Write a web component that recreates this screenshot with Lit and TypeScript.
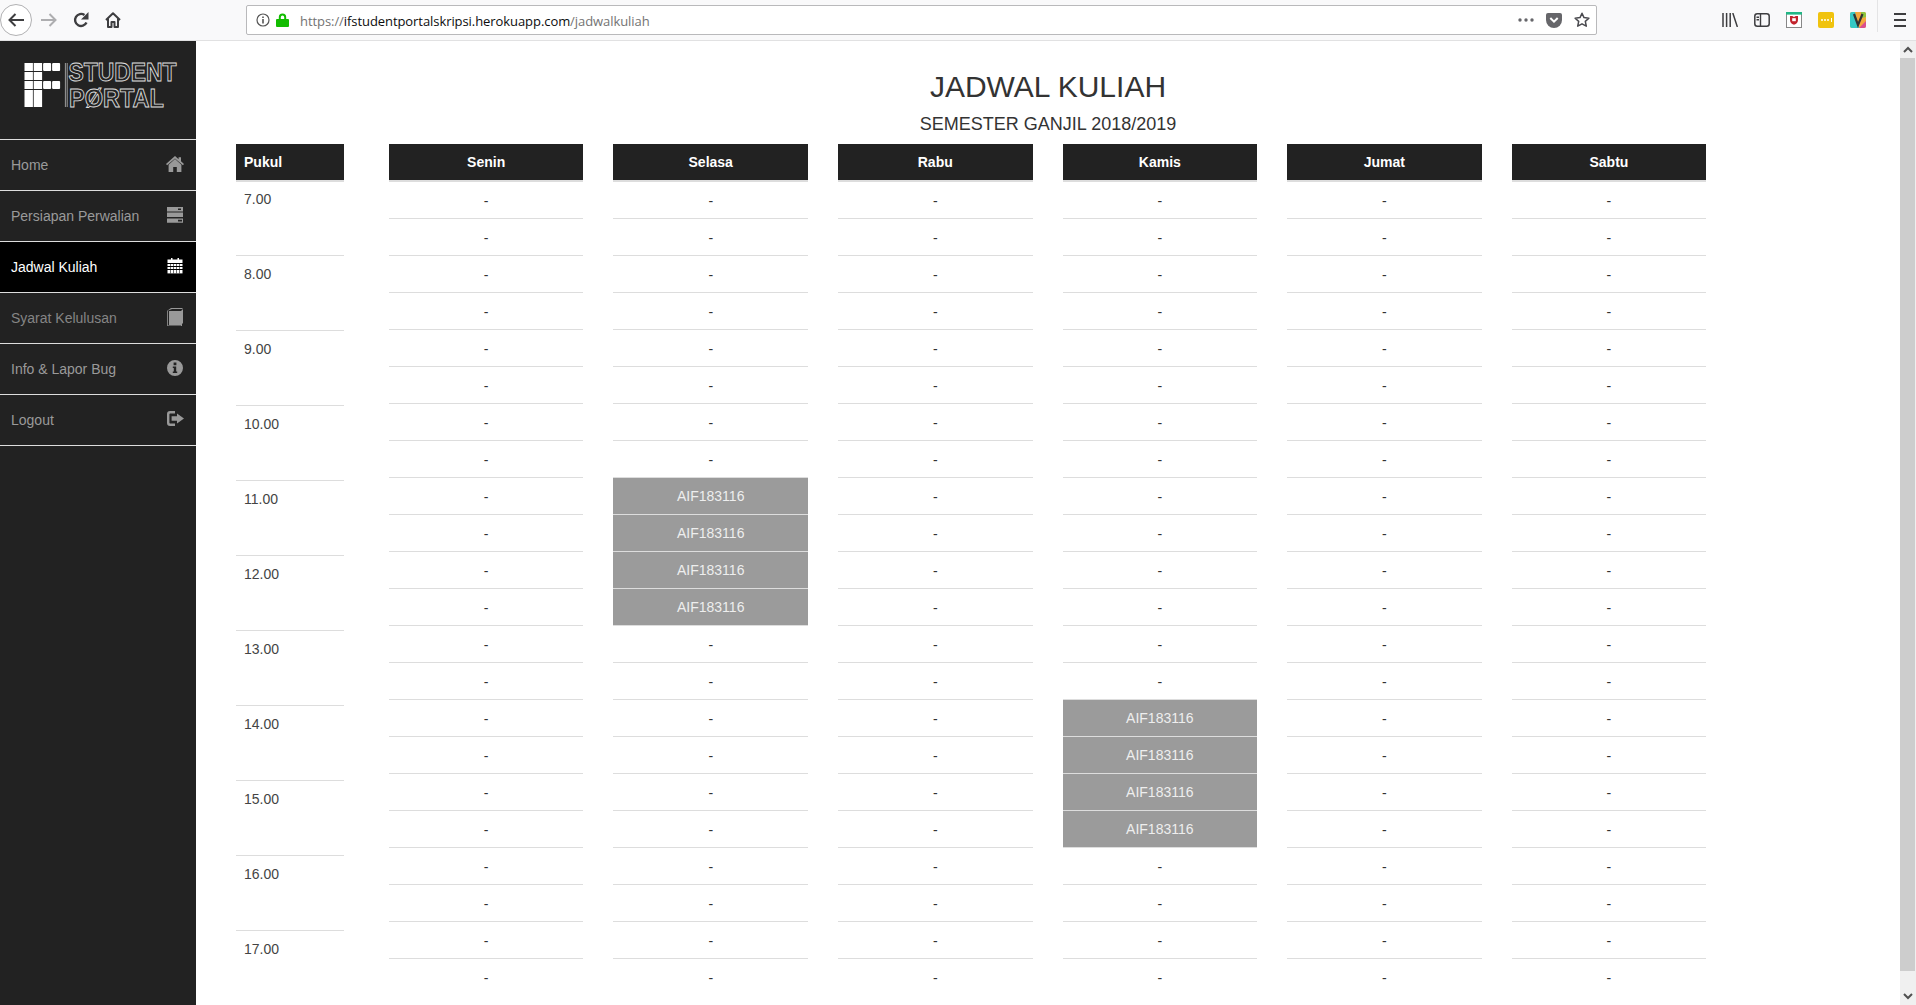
import { LitElement, html, css, svg } from "lit";
import { customElement } from "lit/decorators.js";

const DAYS: { name: string; filled: number[] }[] = [
  { name: "Senin", filled: [] },
  { name: "Selasa", filled: [8, 9, 10, 11] },
  { name: "Rabu", filled: [] },
  { name: "Kamis", filled: [14, 15, 16, 17] },
  { name: "Jumat", filled: [] },
  { name: "Sabtu", filled: [] },
];
const HOURS = ["7.00", "8.00", "9.00", "10.00", "11.00", "12.00", "13.00", "14.00", "15.00", "16.00", "17.00"];
const ROWS = Array.from({ length: 22 }, (_, i) => i);

const ICONS: Record<string, unknown> = {
  home: svg`<svg width="18" height="16" viewBox="0 0 18 16"><path fill="#999" d="M9 0 12.6 3.2V1.2H15V5.3L18 8 16.9 9.2 9 2.4 1.1 9.2 0 8ZM9 3.1 15.4 8.7V16H10.8V11H7.2V16H2.6V8.7Z"/></svg>`,
  server: svg`<svg width="18" height="16" viewBox="0 0 18 16"><path fill="#999" fill-rule="evenodd" d="M1 0H17V4.4H1ZM12 1.4V3H15V1.4ZM1 5.6H17V10H1ZM1 11.4H17V15.8H1ZM12 12.8V14.4H16V12.8Z"/></svg>`,
  calendar: svg`<svg width="16" height="16" viewBox="0 0 16 16"><path fill="#fff" d="M4 0H5.5V1.5H10.5V0H12V1.5H15.5V5H.5V1.5H4Z"/><g fill="#fff"><rect x=".5" y="6" width="15" height="2"/><rect x=".5" y="9" width="15" height="2"/><rect x=".5" y="12" width="15" height="3.4"/></g><g fill="#000" opacity=".55"><rect x="3" y="6" width="1" height="9.4"/><rect x="6" y="6" width="1" height="9.4"/><rect x="9" y="6" width="1" height="9.4"/><rect x="12" y="6" width="1" height="9.4"/></g></svg>`,
  book: svg`<svg width="17" height="18" viewBox="0 0 17 18"><path fill="#999" d="M4 0H15.5V1H5L1 2.5V17.4H14V2.6H15V1.6H16V15.5H15V18H.2V2.8Z"/><path fill="#999" d="M2 3H14V17H2Z"/></svg>`,
  info: svg`<svg width="16" height="16" viewBox="0 0 16 16"><path fill="#999" fill-rule="evenodd" d="M8 0A8 8 0 1 1 8 16 8 8 0 0 1 8 0ZM6.6 2.6V5.2H9.4V2.6ZM5.8 6.4V8H6.8V11.4H5.8V13H10.2V11.4H9.2V6.4Z"/></svg>`,
  logout: svg`<svg width="17" height="15" viewBox="0 0 17 15"><path fill="#999" d="M3 0H8V2.4H3.2Q2.4 2.4 2.4 3.2V11.8Q2.4 12.6 3.2 12.6H8V15H3Q0 15 0 12V3Q0 0 3 0Z"/><path fill="#999" d="M10 2.4 17 7.5 10 12.6V9.8H4.6V5.2H10Z"/></svg>`,
};

const NAV = [
  { label: "Home", icon: "home", cls: "" },
  { label: "Persiapan Perwalian", icon: "server", cls: "" },
  { label: "Jadwal Kuliah", icon: "calendar", cls: "active" },
  { label: "Syarat Kelulusan", icon: "book", cls: "dim" },
  { label: "Info & Lapor Bug", icon: "info", cls: "" },
  { label: "Logout", icon: "logout", cls: "" },
];

@customElement("browser-bar")
class BrowserBar extends LitElement {
  static styles = css`
    :host { display: flex; align-items: center; height: 40px; background: #f9f9fa; border-bottom: 1px solid #e1e1e2; flex: none; }
    .btn { width: 32px; height: 40px; display: flex; align-items: center; justify-content: center; flex: none; }
    .back { margin-right: 1px; }
    .circle { width: 32px; height: 32px; box-sizing: border-box; border: 1px solid #b1b1b3; border-radius: 50%; background: #fff; display: flex; align-items: center; justify-content: center; }
    .url { width: 1351px; height: 30px; margin-left: 117px; box-sizing: border-box; border: 1px solid #b9b9bb; border-radius: 2px; background: #fff; display: flex; align-items: center; padding-left: 9px; flex: none; }
    .addr { font: 13px "Open Sans", sans-serif; color: #0c0c0d; margin: 2px 0 0 11px; white-space: nowrap; letter-spacing: -.07px; }
    .addr span { color: #737373; }
    .lock { margin-left: 6px; }
    .end { margin-left: auto; margin-right: 6px; display: flex; align-items: center; gap: 12px; }
    .exts { margin-left: 117px; display: flex; flex: none; }
    .sep { width: 1px; height: 32px; background: #e4e4e5; margin-left: 3px; flex: none; }
    .menu { margin-left: 6px; }
  `;
  render() {
    return html`
      <div class="btn back"><div class="circle"><svg width="16" height="16" viewBox="0 0 16 16"><path fill="none" stroke="#3e3e40" stroke-width="2" d="M16 8H1.5M7.5 2 1.5 8l6 6"/></svg></div></div>
      <div class="btn"><svg width="16" height="16" viewBox="0 0 16 16"><path fill="none" stroke="#aeaeb0" stroke-width="2" d="M0 8H14.5M8.5 2l6 6-6 6"/></svg></div>
      <div class="btn"><svg width="16" height="16" viewBox="0 0 16 16"><path fill="none" stroke="#3e3e40" stroke-width="2.4" d="M13.5 10.5A6 6 0 1 1 11.5 3"/><path fill="#3e3e40" d="M15.5 0V7.5H8Z"/></svg></div>
      <div class="btn"><svg width="16" height="16" viewBox="0 0 16 16"><path fill="none" stroke="#3e3e40" stroke-width="2" stroke-linejoin="round" d="M1 8 8 1.2 15 8M3 6.5V15H6.5V10H9.5V15H13V6.5"/></svg></div>
      <div class="url">
        <svg width="14" height="14" viewBox="0 0 14 14"><circle cx="7" cy="7" r="6" fill="none" stroke="#555" stroke-width="1.2"/><path fill="#555" d="M6.2 6H7.8V10.5H6.2ZM6.2 3.4H7.8V5H6.2Z"/></svg>
        <svg class="lock" width="13" height="14" viewBox="0 0 13 14"><path fill="#12bc00" d="M1 6H2.8V4.2A3.7 3.7 0 0 1 10.2 4.2V6H12Q13 6 13 7V13Q13 14 12 14H1Q0 14 0 13V7Q0 6 1 6ZM4.8 6H8.2V4.2A1.7 1.7 0 0 0 4.8 4.2Z"/></svg>
        <div class="addr"><span>https://</span>ifstudentportalskripsi.herokuapp.com<span>/jadwalkuliah</span></div>
        <div class="end">
          <svg width="16" height="4" viewBox="0 0 16 4"><g fill="#66666a"><circle cx="2" cy="2" r="1.7"/><circle cx="8" cy="2" r="1.7"/><circle cx="14" cy="2" r="1.7"/></g></svg>
          <svg width="16" height="15" viewBox="0 0 16 15"><path fill="#66666a" d="M2 0H14Q16 0 16 2V7A8 8 0 0 1 0 7V2Q0 0 2 0Z"/><path fill="none" stroke="#fff" stroke-width="2" d="M4.3 5 8 8.7 11.7 5"/></svg>
          <svg width="16" height="16" viewBox="0 0 16 16"><path fill="none" stroke="#4a4a4f" stroke-width="1.5" stroke-linejoin="round" d="M8 1.2 10 5.6 14.9 6.2 11.3 9.4 12.3 14.2 8 11.8 3.7 14.2 4.7 9.4 1.1 6.2 6 5.6Z"/></svg>
        </div>
      </div>
      <div class="exts">
        <div class="btn"><svg width="16" height="14" viewBox="0 0 16 14"><path fill="none" stroke="#3e3e40" stroke-width="1.5" d="M1 0V14M4.6 0V14M8.2 0V14M10.8 0 15.4 14"/></svg></div>
        <div class="btn"><svg width="16" height="14" viewBox="0 0 16 14"><rect x=".8" y=".8" width="14.4" height="12.4" rx="2.5" fill="none" stroke="#3e3e40" stroke-width="1.5"/><path stroke="#3e3e40" stroke-width="1.4" d="M6.5 1V13M2.5 4.2H5M2.5 6.8H5"/></svg></div>
        <div class="btn"><svg width="16" height="16" viewBox="0 0 16 16"><rect x=".5" y=".5" width="15" height="15" fill="#fff" stroke="#888"/><rect width="16" height="2.6" fill="#21b685"/><path fill="#c2222c" d="M4 4H6.2L8 5 9.8 4H12V8Q12 11.5 8 12.8 4 11.5 4 8Z"/><rect x="6.2" y="6.2" width="3.6" height="3" fill="#fff"/></svg></div>
        <div class="btn"><svg width="16" height="16" viewBox="0 0 16 16"><rect width="16" height="16" rx="2" fill="#f0c30f"/><g fill="#fff"><circle cx="4" cy="8" r="1"/><circle cx="7" cy="8" r="1"/><circle cx="10" cy="8" r="1"/><rect x="13" y="6" width="1" height="4"/></g></svg></div>
        <div class="btn"><svg width="16" height="16" viewBox="0 0 16 16"><rect width="16" height="16" rx="2" fill="#f3a83b"/><path fill="#35c9c4" d="M0 2Q0 0 2 0H5L9 16H2Q0 16 0 14Z"/><path fill="#d94e8f" d="M9 16 16 9V14Q16 16 14 16Z"/><path fill="#8dc63f" d="M11 0H14Q16 0 16 2V5L12 6Z"/><path fill="none" stroke="#333" stroke-width="2.2" d="M4 2 8 13 12.5 2"/></svg></div>
        <div class="sep"></div>
        <div class="btn menu"><svg width="16" height="14" viewBox="0 0 16 14"><path stroke="#3e3e40" stroke-width="2" d="M2 1H14M2 7H14M2 13H14" fill="none"/></svg></div>
      </div>
    `;
  }
}

@customElement("side-nav")
class SideNav extends LitElement {
  static styles = css`
    :host { display: block; width: 196px; background: #222; flex: none; font: 14px "Liberation Sans", Arial, sans-serif; }
    .logo { height: 99px; box-sizing: border-box; padding: 10px 0 0 24px; border-bottom: 1px solid #ddd; display: flex; }
    .logo svg { display: block; overflow: visible; }
    .wm { font-family: "Liberation Sans", sans-serif; font-weight: 700; font-size: 25px; fill: none; stroke: #e0e0e0; stroke-width: .85px; }
    .item { height: 51px; box-sizing: border-box; border-bottom: 1px solid #ddd; display: flex; align-items: center; justify-content: space-between; padding: 0 12px 0 11px; color: #9a9a9a; }
    .item.active { color: #fff; background: #000; }
    .item.dim { color: #858585; }
    .ic { width: 18px; height: 18px; display: flex; align-items: center; justify-content: center; margin-top: -3px; }
  `;
  render() {
    return html`
      <div class="logo">
        <svg width="165" height="72" viewBox="0 0 165 72">
          <g fill="#fff" transform="translate(.5 12)">
            <rect x="0" y="0" width="8.4" height="8"/><rect x="9.2" y="0" width="8.4" height="8"/><rect x="18.6" y="0" width="8" height="8" rx="1"/><rect x="27.6" y="0" width="8" height="8" rx="1"/>
            <rect x="0" y="9" width="8.4" height="8"/><rect x="9.2" y="9" width="8.4" height="8"/>
            <rect x="0" y="18" width="8.4" height="8"/><rect x="9.2" y="18" width="8.4" height="8"/><rect x="18.6" y="18" width="8" height="8" rx="1"/><rect x="27.6" y="18" width="8" height="8" rx="1"/>
            <rect x="0" y="27" width="8.4" height="17"/><rect x="9.2" y="27" width="8.4" height="17"/>
          </g>
          <path stroke="#bbb" stroke-width=".8" d="M41.4 12V56M43.2 12V56"/>
          <text class="wm" x="44.5" y="30" textLength="108" lengthAdjust="spacingAndGlyphs">STUDENT</text>
          <text class="wm" x="45" y="56" textLength="95" lengthAdjust="spacingAndGlyphs">PØRTAL</text>
        </svg>
      </div>
      ${NAV.map(
        (n) => html`<div class="item ${n.cls}"><span>${n.label}</span><span class="ic">${ICONS[n.icon]}</span></div>`
      )}
    `;
  }
}

@customElement("schedule-table")
class ScheduleTable extends LitElement {
  static styles = css`
    :host { display: flex; gap: 30px; padding-left: 40px; font: 14px/20px "Liberation Sans", Arial, sans-serif; color: #333; }
    .head { height: 38px; box-sizing: border-box; background: #222; border-bottom: 2px solid #ddd; color: #fff; font-weight: 700; text-align: center; padding-top: 8px; }
    .hours { width: 108px; margin-right: 14.9px; flex: none; }
    .hours .head { text-align: left; padding-left: 8px; }
    .time { height: 75px; box-sizing: border-box; border-top: 1px solid #ddd; padding: 8px 8px 0; color: #444; }
    .time.first { height: 73px; border-top: 0; padding-top: 7px; }
    .day { width: 194.55px; flex: none; }
    .cell { height: 37px; box-sizing: border-box; border-top: 1px solid #ddd; text-align: center; padding-top: 9px; }
    .cell.first { height: 36px; border-top: 0; }
    .cell.on { background: #9b9b9b; color: #eee; padding-top: 8px; }
  `;
  render() {
    return html`
      <div class="hours">
        <div class="head">Pukul</div>
        ${HOURS.map((h, i) => html`<div class="time ${i === 0 ? "first" : ""}">${h}</div>`)}
      </div>
      ${DAYS.map(
        (d) => html`<div class="day">
          <div class="head">${d.name}</div>
          ${ROWS.map((r) => {
            const on = d.filled.includes(r);
            return html`<div class="cell ${r === 0 ? "first" : ""} ${on ? "on" : ""}">${on ? "AIF183116" : "-"}</div>`;
          })}
        </div>`
      )}
    `;
  }
}

@customElement("app-root")
export class AppRoot extends LitElement {
  static styles = css`
    :host { display: flex; flex-direction: column; width: 1916px; height: 1005px; overflow: hidden; background: #fff; }
    .body { display: flex; flex: 1; min-height: 0; }
    main { flex: 1; min-width: 0; overflow: hidden; font-family: "Liberation Sans", Arial, sans-serif; color: #333; }
    header { text-align: center; padding-top: 28px; height: 103px; box-sizing: border-box; }
    h1 { margin: 0; font-size: 30px; line-height: 36px; font-weight: 400; }
    h2 { margin: 9px 0 0; font-size: 18px; line-height: 20px; font-weight: 400; }
    .scroll { width: 16px; background: #f0f0f0; display: flex; flex-direction: column; flex: none; }
    .arrow { height: 17px; display: flex; align-items: center; justify-content: center; background: #f0f0f0; }
    .thumb { height: 913px; width: 15px; background: #cdcdcd; }
    .rest { flex: 1; }
  `;
  render() {
    return html`
      <browser-bar></browser-bar>
      <div class="body">
        <side-nav></side-nav>
        <main>
          <header>
            <h1>JADWAL KULIAH</h1>
            <h2>SEMESTER GANJIL 2018/2019</h2>
          </header>
          <schedule-table></schedule-table>
        </main>
        <div class="scroll">
          <div class="arrow"><svg width="10" height="7" viewBox="0 0 10 7"><path fill="none" stroke="#505050" stroke-width="2" d="M1 6 5 2 9 6"/></svg></div>
          <div class="thumb"></div>
          <div class="rest"></div>
          <div class="arrow"><svg width="10" height="7" viewBox="0 0 10 7"><path fill="none" stroke="#505050" stroke-width="2" d="M1 1 5 5 9 1"/></svg></div>
        </div>
      </div>
    `;
  }
}
